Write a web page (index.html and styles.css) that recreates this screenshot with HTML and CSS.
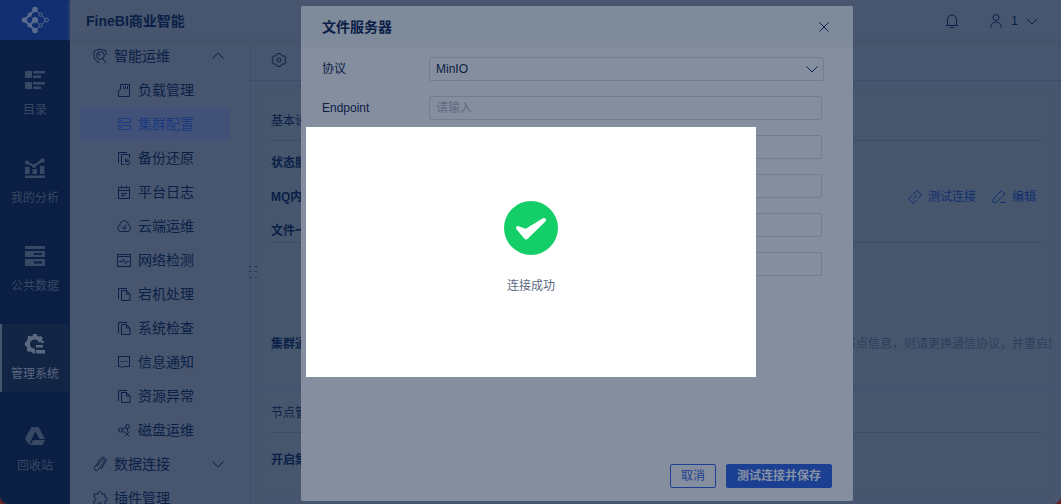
FILE: index.html
```html
<!DOCTYPE html>
<html lang="zh-CN">
<head>
    <meta charset="UTF-8">
    <meta name="viewport" content="width=device-width, initial-scale=1.0">
    <title>FineBI商业智能</title>
    <link rel="stylesheet" href="styles.css">
</head>
<body>
    <svg class="defs" aria-hidden="true">
        <symbol id="i-copy" viewBox="0 0 16 16"><path d="M2.500 13V2.500H11M5.500 4.500h5l3.500 3.500v6.500H5.500zM10.500 4.500V8H14"/></symbol>
        <symbol id="i-down" viewBox="0 0 14 14"><path d="M1.500 4.500L7 10l5.500-5.500"/></symbol>
        <symbol id="i-up" viewBox="0 0 14 14"><path d="M1.500 9.500L7 4l5.500 5.500"/></symbol>
    </svg>
    <div class="app">
        <nav class="sidebar">
            <a href="#" class="logo" aria-label="FineBI">
                <svg viewBox="0 0 28 28">
                    <path class="thick" d="M14 3.500L3.500 14 8.700 19.300 14 24.500M8.700 19.300L14 14"/>
                    <path class="thin" d="M14 3.500l4.500 4M20.500 9.500l4 3.500M24.500 15l-4 3.500M14 14l4.500 4.500M14 24.500l4.500-4"/>
                    <g class="dots"><circle cx="14" cy="3.500" r="2.800"/><circle cx="3.500" cy="14" r="2.800"/><circle cx="8.700" cy="8.700" r="2.200"/><circle cx="8.700" cy="19.300" r="2.200"/><circle cx="14" cy="24.500" r="2.800"/><circle cx="14" cy="14" r="3"/></g>
                    <g class="rings"><circle cx="19.500" cy="8.500" r="1.700"/><circle cx="25.500" cy="14" r="1.900"/><circle cx="19.500" cy="19.500" r="1.700"/></g>
                </svg>
            </a>
            <a href="#" class="side-item">
                <svg viewBox="0 0 20 20"><path d="M0 1h7v7H0zM8 1h12v2.500H8zM8 5.500h8V8H8zM0 12h7v7H0zM8 12h12v2.500H8zM8 16.500h8V19H8z"/></svg>
                <span>目录</span>
            </a>
            <a href="#" class="side-item">
                <svg viewBox="0 0 20 20"><path d="M0 9h4.500v7H0zM7.500 11h4.500v5H7.500zM15 8h4.500v8H15zM0 17.500h20V20H0z"/><path d="M2 4.500l7 3.500 8-5.500" fill="none" stroke="currentColor" stroke-width="2.200"/><circle cx="2" cy="4.500" r="2"/><circle cx="9" cy="8" r="2"/><circle cx="17.500" cy="2.500" r="2.300"/></svg>
                <span>我的分析</span>
            </a>
            <a href="#" class="side-item">
                <svg viewBox="0 0 20 20"><path fill-rule="evenodd" d="M0 0h20v3H0zM0 5h20v6H0zM9 7v2h8V7zM0 13h20v7H0zM9 15.500v2h8v-2z"/></svg>
                <span>公共数据</span>
            </a>
            <a href="#" class="side-item active">
                <svg viewBox="0 0 20 20"><path d="M10 16.500A6.500 6.500 0 1 1 15.700 8" fill="none" stroke="currentColor" stroke-width="4"/><path d="M8 0h4v4H8zM0 8h3v4H0zM2.500 2.500L5 1.500l2 3-3 2zM15 1.500L18 4l-2 3-3-2zM3 18l-1.500-3 3-2 3 3.500zM7.500 16h2.500v3.500H7.500zM16 7h3v2h-3zM11 11h7v2.500h-7zM11 16h9v3.500h-9z"/></svg>
                <span>管理系统</span>
            </a>
            <a href="#" class="side-item last">
                <svg viewBox="0 0 20 20"><path d="M6.500 1h3l1.500 3-6.500 14h-1L0 12.500zM10.500 1h3l6.500 12h-5.500L9.500 4zM8 14h12l-2.500 5H5z"/></svg>
                <span>回收站</span>
            </a>
        </nav>

        <div class="page">
            <header class="topbar">
                <h1>FineBI商业智能</h1>
                <button class="icon-btn bell" aria-label="消息"><svg class="line" viewBox="0 0 16 16"><path d="M3.500 12.500V6.500a4.500 4.500 0 0 1 9 0v6M2 12.500h12M6 14.500h4"/></svg></button>
                <button class="user">
                    <svg class="line" viewBox="0 0 16 16"><circle cx="8" cy="4.500" r="3"/><path d="M3 14.500v-1a5 4.500 0 0 1 10 0v1"/></svg>
                    <span>1</span>
                    <svg class="line chevron"><use href="#i-down"/></svg>
                </button>
            </header>

            <div class="body">
                <nav class="tree">
                    <a href="#" class="group"><svg class="line" viewBox="0 0 16 16"><path d="M7.500 14.500C4 13.500 2 11 2 8V3l6-2 6 2v4M11 11l3 4M8 8L6.500 5.500"/><circle cx="8.500" cy="7.500" r="3.800"/></svg><span>智能运维</span><svg class="line chevron"><use href="#i-up"/></svg></a>
                    <a href="#"><svg class="line" viewBox="0 0 16 16"><path d="M4.500 2.500h9v12h-11v-6l2-1zM7.500 4v3M9.500 4v3M11.500 4v3"/></svg><span>负载管理</span></a>
                    <a href="#" class="selected"><svg class="line" viewBox="0 0 16 16"><path d="M2.500 2.500h12v4h-12zM2.500 9.500h12v4h-12zM4.500 4.500h2M4.500 11.500h2"/></svg><span>集群配置</span></a>
                    <a href="#"><svg class="line" viewBox="0 0 16 16"><path d="M2.500 13V2.500H11M13.500 8V4.500h-8v10H8"/><path d="M9.500 8.500v3H12M9.500 11a2.300 2.300 0 1 1 0 2.500"/></svg><span>备份还原</span></a>
                    <a href="#"><svg class="line" viewBox="0 0 16 16"><path d="M2.500 3.500h11v11h-11zM2.500 6.500h11M5.500 1.500v3M10.500 1.500v3M5 9.500h6M5 11.500h4"/></svg><span>平台日志</span></a>
                    <a href="#"><svg class="line" viewBox="0 0 16 16"><path d="M4.500 13.500a3.300 3.300 0 0 1-.7-6.300c.5-6 8.400-6 8.700 0a3.300 3.300 0 0 1-.7 6.300zM5.500 8.500l2 2.500L10 6.500M8 11.500l2.500-2"/></svg><span>云端运维</span></a>
                    <a href="#"><svg class="line" viewBox="0 0 16 16"><path d="M1.500 2.500h13v12h-13zM1.500 4.500h13M3 9.500h3l1.500-2 2 4 1.500-2h2"/></svg><span>网络检测</span></a>
                    <a href="#"><svg class="line"><use href="#i-copy"/></svg><span>宕机处理</span></a>
                    <a href="#"><svg class="line"><use href="#i-copy"/></svg><span>系统检查</span></a>
                    <a href="#"><svg class="line" viewBox="0 0 16 16"><path d="M2.500 2.500h11v10H8L6.500 14 5 12.500H2.500zM4.500 7.500h1.500M7.300 7.500h1.500M10 7.500h1.500"/></svg><span>信息通知</span></a>
                    <a href="#"><svg class="line"><use href="#i-copy"/></svg><span>资源异常</span></a>
                    <a href="#"><svg class="line" viewBox="0 0 16 16"><circle cx="4.500" cy="8" r="2"/><circle cx="11.500" cy="4.500" r="2"/><path d="M6.500 7.500l3.500-2M6 9.500l2 1M11.500 6.500v3M8.500 9.500l5 5M13.500 9.500l-5 5"/></svg><span>磁盘运维</span></a>
                    <a href="#" class="group"><svg class="line" viewBox="0 0 16 16"><path d="M5 10.500l4.500-6.500c1.500-2 4-.5 2.500 1.800l-5.500 7.700c-2 2.500-5.500.5-3.800-2.300L8 3.500C10 .5 12.500 1 13.500 2.500s.5 3-.5 4.500l-4 6"/></svg><span>数据连接</span><svg class="line chevron"><use href="#i-down"/></svg></a>
                    <a href="#" class="group"><svg class="line" viewBox="0 0 16 16"><path d="M2 4h4c-1-3.500 4.500-3.500 3.500 0H13v3.500c3-.5 3 4 0 3.500v3.500H9.500c.5-2.500-4-2.500-3.500 0H2V11c2.500.5 2.500-4 0-3.500z"/></svg><span>插件管理</span></a>
                    <svg class="grip" viewBox="0 0 10 14"><path d="M1 1h2v1H1zM7 1h2v1H7zM1 6h2v1H1zM7 6h2v1H7zM1 12h2v1H1zM7 12h2v1H7z"/></svg>
                </nav>

                <main class="content">
                    <div class="toolbar">
                        <button class="icon-btn" aria-label="设置"><svg class="line" viewBox="0 0 16 16"><path d="M6.500 1.500h3l.7 1.800 1.300.8 1.900-.4 1.500 2.600L13.600 8l1.300 1.700-1.500 2.600-1.900-.4-1.300.8-.7 1.800h-3l-.7-1.800-1.300-.8-1.900.4-1.500-2.600L2.400 8 1.100 6.300l1.500-2.600 1.900.4 1.300-.8z"/><circle cx="8" cy="8" r="2"/></svg></button>
                    </div>
                    <section class="card basic">
                        <h2>基本设置</h2>
                        <div class="services">
                            <div class="row">状态服务器</div>
                            <div class="row"><span>MQ内部队列</span>
                                <div class="links">
                                    <a href="#"><svg class="line" viewBox="0 0 16 16"><path d="M6.500 5L10 1.500 14.500 6 11 9.500M9.500 11L6 14.500 1.500 10 5 6.500M6 10l4-4"/></svg>测试连接</a>
                                    <a href="#"><svg class="line" viewBox="0 0 16 16"><path d="M2 13.500V10l8.500-8.500L14 5l-8.500 8.500zM9 13.500h6"/></svg>编辑</a>
                                </div>
                            </div>
                            <div class="row">文件一致性</div>
                        </div>
                        <div class="protocol">
                            <strong>集群通信</strong>
                            <p>节点信息，则请更换通信协议，并重启集群</p>
                        </div>
                    </section>
                    <section class="card nodes">
                        <h2>节点管理</h2>
                        <div class="row">开启集群</div>
                    </section>
                </main>
            </div>
        </div>

        <form class="dialog">
            <div class="dialog-head">
                <h2>文件服务器</h2>
                <button type="button" class="icon-btn" aria-label="关闭"><svg class="line" viewBox="0 0 16 16"><path d="M3.500 3.500l9 9M12.500 3.500l-9 9"/></svg></button>
            </div>
            <div class="fields">
                <label for="protocol">协议</label>
                <div class="select"><select id="protocol"><option>MinIO</option></select><svg class="line chevron"><use href="#i-down"/></svg></div>
                <label for="endpoint">Endpoint</label>
                <input id="endpoint" type="text" placeholder="请输入">
                <input type="text" aria-label="Access Key">
                <input type="text" aria-label="Secret Key">
                <input type="text" aria-label="Bucket">
                <input type="text" aria-label="路径">
            </div>
            <div class="actions">
                <button type="button" class="btn">取消</button>
                <button type="button" class="btn primary">测试连接并保存</button>
            </div>
        </form>

        <div class="toast" role="status">
            <svg viewBox="0 0 54 54"><circle cx="27" cy="27" r="27"/><path d="M14 27l8 9.500L40 19l-18 11z"/></svg>
            <p>连接成功</p>
        </div>
    </div>
</body>
</html>
```
FILE: styles.css
```css
* {
    box-sizing: border-box;
}
html {
    background: #6b2020;
}
body {
    margin: 0;
    font-family: "Liberation Sans", "Noto Sans CJK SC", sans-serif;
    font-size: 12px;
    line-height: 16px;
    color: #0b2046;
}
h1, h2, p {
    margin: 0;
}
a {
    color: inherit;
    text-decoration: none;
}
button, input, select {
    font: inherit;
    color: inherit;
}
.defs {
    display: none;
}
.line {
    width: 16px;
    height: 16px;
    fill: none;
    stroke: currentColor;
    stroke-width: 1;
    flex: none;
}
.line.chevron {
    width: 14px;
    height: 14px;
}
.icon-btn {
    display: flex;
    padding: 0;
    border: 0;
    background: none;
}
.app {
    position: relative;
    display: flex;
    height: 100vh;
    overflow: hidden;
    background: #47566e;
    border-radius: 0 0 8px 8px;
}

/* sidebar */
.sidebar {
    width: 70px;
    flex: none;
    display: flex;
    flex-direction: column;
    gap: 20px;
    background: #0a1f43;
}
.logo {
    height: 40px;
    display: flex;
    align-items: center;
    justify-content: center;
    background: #112f70;
    color: #596b8e;
}
.logo svg {
    width: 28px;
    height: 28px;
    fill: none;
    stroke: currentColor;
}
.logo .thick {
    stroke-width: 2;
}
.logo .thin {
    stroke-width: 1;
}
.logo .dots {
    fill: currentColor;
    stroke: none;
}
.side-item {
    height: 68px;
    flex: none;
    padding-top: 10px;
    display: flex;
    flex-direction: column;
    align-items: center;
    gap: 12px;
    color: #384864;
}
.side-item svg {
    width: 20px;
    height: 20px;
    fill: currentColor;
}
.side-item.active {
    background: #132545;
    box-shadow: inset 2px 0 #47566e;
    color: #5a6880;
}
.side-item.last {
    margin-top: 4px;
}

/* top bar */
.page {
    flex: 1;
    min-width: 0;
    display: flex;
    flex-direction: column;
}
.topbar {
    height: 39px;
    flex: none;
    display: flex;
    align-items: center;
    padding: 2px 22px 0 16px;
    box-shadow: 0 1px 5px #405069;
}
.topbar h1 {
    flex: 1;
    font-size: 14px;
    line-height: 20px;
}
.bell {
    margin-right: 28px;
}
.user {
    display: flex;
    align-items: center;
    gap: 7px;
    padding: 0;
    border: 0;
    background: none;
}

/* tree */
.body {
    flex: 1;
    min-height: 0;
    display: flex;
}
.tree {
    position: relative;
    width: 181px;
    flex: none;
    padding: 0 20px 0 10px;
    border-right: 1px solid #405069;
}
.tree a {
    height: 34px;
    display: flex;
    align-items: center;
    gap: 6px;
    padding: 0 5px 0 36px;
    font-size: 14px;
    line-height: 20px;
}
.tree a.group {
    padding-left: 12px;
}
.tree a span {
    flex: 1;
}
.tree .selected {
    background: #415177;
    color: #1c3a7f;
}
.grip {
    position: absolute;
    right: -8px;
    top: 226px;
    width: 10px;
    height: 14px;
    fill: #1c2f55;
}

/* content */
.content {
    flex: 1;
    min-width: 0;
}
.toolbar {
    height: 42px;
    display: flex;
    align-items: center;
    padding-left: 20px;
    border-bottom: 1px solid #3d4d67;
}
.card {
    margin: 8px 10px 8px 9px;
    padding-left: 11px;
    background: #46566d;
    box-shadow: 0 0 3px #435270;
}
.basic {
    height: 295px;
}
.nodes {
    height: 103px;
}
.card h2 {
    margin-right: 10px;
    padding: 24px 0 11px;
    border-bottom: 1px solid #3d4d67;
    font-size: 12px;
    font-weight: 400;
}
.nodes h2 {
    padding: 13px 0 11px;
}
.row {
    display: flex;
    justify-content: space-between;
    align-items: center;
    height: 34px;
    font-weight: 700;
}
.services {
    margin-right: 10px;
    padding-top: 5px;
    height: 102px;
    border-bottom: 1px solid #3d4d67;
}
.nodes .row {
    padding-top: 20px;
}
.links {
    display: flex;
    gap: 15px;
    padding-right: 5px;
    color: #132f70;
    font-weight: 400;
}
.links a {
    display: flex;
    align-items: center;
    gap: 5px;
}
.protocol {
    display: grid;
    grid-template-columns: 1fr 207px;
    padding-top: 93px;
    overflow: hidden;
}
.protocol p {
    white-space: nowrap;
    overflow: hidden;
    color: #2e3f5e;
}

/* dialog */
.dialog {
    position: absolute;
    left: 301px;
    top: 6px;
    width: 552px;
    height: 495px;
    display: flex;
    flex-direction: column;
    background: #858e9e;
    border-radius: 2px;
}
.dialog-head {
    height: 41px;
    display: flex;
    align-items: center;
    justify-content: space-between;
    padding: 0 21px;
    background: #7f8a9b;
    border-radius: 2px 2px 0 0;
}
.dialog-head h2 {
    font-size: 14px;
    line-height: 20px;
}
.fields {
    flex: 1;
    display: grid;
    grid-template-columns: 107px 1fr;
    grid-auto-rows: 24px;
    row-gap: 15px;
    align-items: center;
    padding: 10px 31px 0 21px;
}
.fields input, .fields select {
    grid-column: 2;
    width: 100%;
    height: 24px;
    padding: 0 6px;
    background: none;
    border: 1px solid #717d91;
    border-radius: 2px;
}
.fields input::placeholder {
    color: #5d6a81;
}
.fields select {
    appearance: none;
}
.select {
    position: relative;
    margin-right: -2px;
}
.select select {
    display: block;
}
.select svg {
    position: absolute;
    right: 5px;
    top: 5px;
}
.actions {
    display: flex;
    justify-content: flex-end;
    gap: 10px;
    padding: 0 21px 13px;
}
.btn {
    height: 24px;
    padding: 0 10px;
    border: 1px solid #1b3f91;
    border-radius: 2px;
    background: none;
    color: #1b3f91;
}
.btn.primary {
    background: #1b3f91;
    color: #8791a4;
    font-weight: 700;
}

/* toast */
.toast {
    position: absolute;
    left: 306px;
    top: 127px;
    width: 450px;
    height: 250px;
    display: flex;
    flex-direction: column;
    align-items: center;
    gap: 23px;
    padding-top: 74px;
    background: #fff;
    color: #5b6880;
}
.toast svg {
    width: 54px;
    height: 54px;
    fill: #14cf68;
}
.toast path {
    fill: #fff;
    stroke: #fff;
    stroke-width: 4;
    stroke-linecap: round;
    stroke-linejoin: round;
}
```
